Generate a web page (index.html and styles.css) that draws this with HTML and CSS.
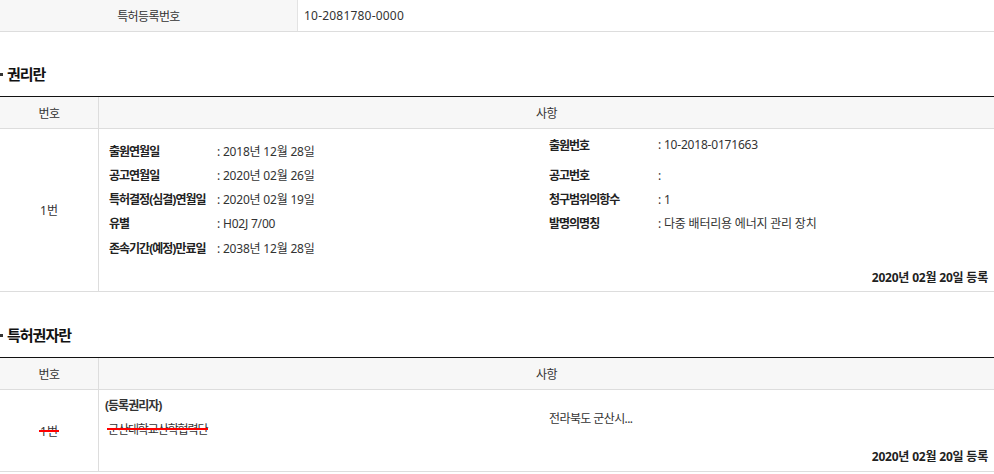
FILE: index.html
```html
<!DOCTYPE html>
<html lang="ko">
<head>
<meta charset="utf-8">
<link rel="stylesheet" href="styles.css">
</head>
<body>
<div class="top-row">
  <div class="top-th">특허등록번호</div>
  <div class="top-td">10-2081780-0000</div>
</div>

<h3 class="sec-title"><span class="dot"></span>권리란</h3>
<div class="grid-table">
  <div class="g-head">
    <div class="c-no">번호</div>
    <div class="c-body head-body">사항</div>
  </div>
  <div class="g-row row-rights">
    <div class="c-no">1번</div>
    <div class="c-body">
      <div class="cols">
        <dl class="info left">
          <div class="item"><dt>출원연월일</dt><dd>: 2018년 12월 28일</dd></div>
          <div class="item"><dt>공고연월일</dt><dd>: 2020년 02월 26일</dd></div>
          <div class="item"><dt>특허결정(심결)연월일</dt><dd>: 2020년 02월 19일</dd></div>
          <div class="item"><dt>유별</dt><dd>: H02J 7/00</dd></div>
          <div class="item"><dt>존속기간(예정)만료일</dt><dd>: 2038년 12월 28일</dd></div>
        </dl>
        <dl class="info right">
          <div class="item first"><dt>출원번호</dt><dd>: 10-2018-0171663</dd></div>
          <div class="item"><dt>공고번호</dt><dd>:</dd></div>
          <div class="item"><dt>청구범위의항수</dt><dd>: 1</dd></div>
          <div class="item"><dt>발명의명칭</dt><dd>: 다중 배터리용 에너지 관리 장치</dd></div>
        </dl>
      </div>
      <div class="reg-date">2020년 02월 20일 등록</div>
    </div>
  </div>
</div>

<h3 class="sec-title second"><span class="dot"></span>특허권자란</h3>
<div class="grid-table">
  <div class="g-head">
    <div class="c-no">번호</div>
    <div class="c-body head-body">사항</div>
  </div>
  <div class="g-row row-owner">
    <div class="c-no"><span class="strike">1번</span></div>
    <div class="c-body">
      <div class="owner-kind">(등록권리자)</div>
      <div class="cols owner-cols">
        <div class="owner-name"><span class="strike">군산대학교산학협력단</span></div>
        <div class="owner-addr">전라북도 군산시...</div>
      </div>
      <div class="reg-date">2020년 02월 20일 등록</div>
    </div>
  </div>
</div>
</body>
</html>
```

FILE: styles.css
```css
* { box-sizing: border-box; }
html, body {
  margin: 0;
  padding: 0;
  background: #fff;
}
body {
  font-family: "Noto Sans", "Noto Sans CJK KR", sans-serif;
  font-size: 12px;
  color: #333;
  width: 994px;
  overflow: hidden;
  white-space: nowrap;
}

.top-row {
  display: flex;
  height: 32px;
  border-bottom: 1px solid #ddd;
}
.top-th {
  width: 298px;
  background: #f7f7f7;
  border-right: 1px solid #e3e3e3;
  display: flex;
  align-items: center;
  justify-content: center;
  color: #333;
  letter-spacing: -0.6px;
}
.top-td {
  display: flex;
  align-items: center;
  padding-left: 6px;
  letter-spacing: 0.2px;
}

.sec-title {
  margin: 30px 0 10px 0;
  height: 24px;
  font-size: 15px;
  font-weight: bold;
  color: #111;
  line-height: 24px;
  letter-spacing: -1px;
  display: flex;
  align-items: center;
}
.sec-title.second { margin-top: 31px; }
.dot {
  display: inline-block;
  width: 3px;
  height: 3px;
  background: #333;
  margin-right: 4px;
}

.grid-table {
  border-top: 1px solid #111;
}
.g-head, .g-row {
  display: flex;
  border-bottom: 1px solid #ddd;
}
.g-head {
  height: 32px;
  background: #f7f7f7;
  letter-spacing: -0.6px;
}
.c-no {
  width: 99px;
  flex: none;
  border-right: 1px solid #ddd;
  display: flex;
  align-items: center;
  justify-content: center;
}
.c-body {
  flex: 1;
  min-width: 0;
}
.head-body {
  display: flex;
  align-items: center;
  justify-content: center;
}

.row-rights { height: 163px; }
.row-rights .c-body { padding: 10px 6px 0 10px; }

.cols {
  display: grid;
  grid-template-columns: 440px 1fr;
}
.info {
  margin: 0;
}
.item {
  display: flex;
  height: 24px;
  align-items: center;
}
.info.left .item:nth-child(5) { height: 25px; }
.info.right { margin-top: -6px; }
.info.right .item.first { height: 30px; align-items: flex-start; padding-top: 3px; }
.item dt {
  width: 108px;
  flex: none;
  font-weight: bold;
  color: #222;
  letter-spacing: -1px;
}
.info.right .item dt { width: 109px; }
.item dd {
  margin: 0;
  color: #333;
  letter-spacing: -0.2px;
}

.reg-date {
  text-align: right;
  font-weight: bold;
  color: #222;
  margin-top: 8px;
  letter-spacing: -0.2px;
}

.row-owner { height: 82px; }
.row-owner .c-no { padding-top: 1px; }
.row-owner .c-body { padding: 6px 6px 0 6px; }
.owner-kind {
  font-weight: bold;
  color: #333;
  height: 19px;
  line-height: 20px;
  letter-spacing: -1px;
}
.owner-cols {
  grid-template-columns: 444px 1fr;
  height: 31px;
}
.owner-name {
  padding-left: 3px;
  padding-top: 5px;
  letter-spacing: -1.1px;
}
.owner-addr {
  margin-top: -6px;
  letter-spacing: -0.6px;
}
.strike {
  position: relative;
  display: inline-block;
}
.strike::after {
  content: "";
  position: absolute;
  left: -1px;
  right: -1px;
  top: 50%;
  height: 2px;
  margin-top: -1px;
  background: #ff0000;
}
.row-owner .reg-date { margin-top: 1px; }
```
